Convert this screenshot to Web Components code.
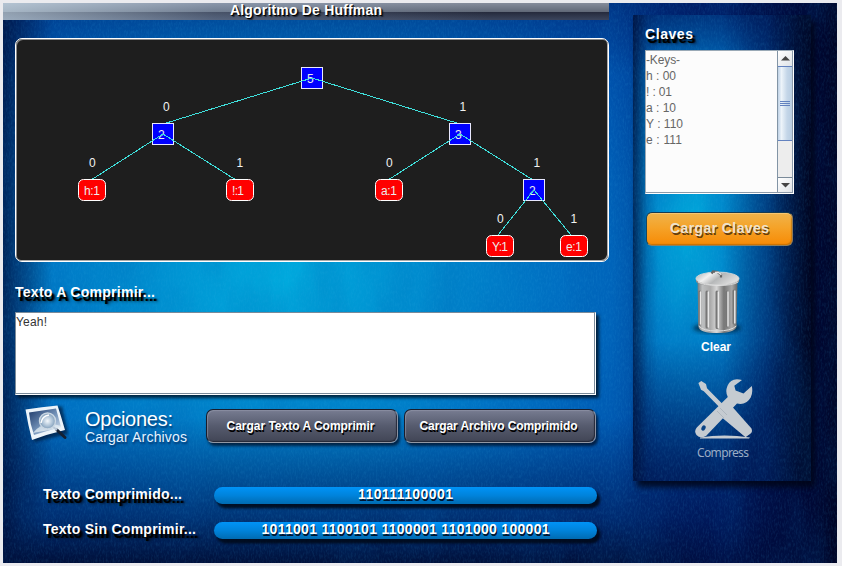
<!DOCTYPE html>
<html lang="es">
<head>
<meta charset="utf-8">
<title>Algoritmo De Huffman</title>
<style>
html,body{margin:0;height:100%;overflow:hidden;background:#ebebef}
body{font-family:"Liberation Sans",Arial,sans-serif;font-size:13px}
</style>
</head>
<body>
<huffman-app></huffman-app>
<script>
const define=(name,html,setup)=>customElements.define(name,class extends HTMLElement{
  connectedCallback(){
    if(this.shadowRoot)return;
    const t=document.createElement('template');
    t.innerHTML=html;
    this.attachShadow({mode:'open'}).append(t.content.cloneNode(true));
    if(setup)setup(this,this.shadowRoot);
  }
});

/* Woven cloth texture laid over the blue gradients */
define('cloth-texture',`<style>:host{display:block;position:absolute;inset:0;pointer-events:none;z-index:0}svg{display:block;width:100%;height:100%}</style>
<svg preserveAspectRatio="none"><defs>
<filter id="w" x="0" y="0" width="100%" height="100%"><feTurbulence type="fractalNoise" baseFrequency="0.6 0.25" numOctaves="2" seed="4"/><feColorMatrix values="0 0 0 0 .05  0 0 0 0 .45  0 0 0 0 .8  1.2 0 0 0 -.5"/></filter>
<filter id="d" x="0" y="0" width="100%" height="100%"><feTurbulence type="fractalNoise" baseFrequency="0.02 0.008" numOctaves="4" seed="9"/><feColorMatrix values="0 0 0 0 0  0 0 0 0 .1  0 0 0 0 .4  1.2 0 0 0 -.5"/></filter></defs>
<rect width="100%" height="100%" filter="url(#d)" opacity=".35"/><rect width="100%" height="100%" filter="url(#w)" opacity=".22"/></svg>`);

/* Single line of text, tracked out to the given width */
define('tracked-text',`<style>:host{display:block;white-space:nowrap}span{display:inline-block;white-space:nowrap}</style><span><slot></slot></span>`,(h,r)=>{
  const fit=()=>{
    const w=+h.getAttribute('w'),s=r.querySelector('span');
    s.style.letterSpacing='0px';
    s.style.letterSpacing=((w-s.getBoundingClientRect().width)/(h.textContent.length-1)).toFixed(3)+'px';
    h.style.width=w+'px';
  };
  fit();
  queueMicrotask(fit);
});

define('title-bar',`<style>:host{display:flex;justify-content:center;height:17px;width:606px;box-sizing:border-box;
background:linear-gradient(90deg,rgba(205,225,240,.65),rgba(150,175,205,.3) 35%,transparent 80%),linear-gradient(#858c9b 0,#626a79 50%,#252a3c 53%,#3b455d 100%);
color:#fff;font-weight:bold;font-size:14px;line-height:15px;text-shadow:1px 1px 0 #000,2px 2px 1px #0008}</style><slot></slot>`);

define('section-label',`<style>:host{display:block;color:#fff;font-weight:bold;font-size:14px;line-height:16px;text-shadow:2px 4px 0 #000,3px 4px 1px #000a,4px 5px 3px #0008}</style><slot></slot>`);

define('huffman-tree',`<style>:host{display:block;width:594px;height:224px;box-sizing:border-box;border-radius:7px;border:1.5px solid #fff;background:#1e1e1e;box-shadow:inset 1px 1px 0 #8a8a8a,inset -1px -1px 0 #aaa}
svg{display:block;margin:-1px;font-size:12px}.n rect{fill:#00f;stroke:#e8e8ff}.l rect{fill:#f00;stroke:#fff}.l text,.n text{fill:#ececec}text{fill:#f2f2f2}line{stroke:#3fe0dc;stroke-width:1;shape-rendering:crispEdges}</style>
<svg width="594" height="224" viewBox="15 38 594 224"></svg>`,(h,r)=>{
  const sq=(x,y,t)=>`<g class="n"><rect x="${x-10.5}" y="${y-10.5}" width="21" height="21"/><text x="${x-5}" y="${y+5}">${t}</text></g>`;
  const leaf=(x,y,t)=>`<g class="l"><rect x="${x-13.5}" y="${y-10.5}" width="27" height="21" rx="5"/><text x="${x-8}" y="${y+5}" textLength="${t[0]=='!'?12:16}">${t}</text></g>`;
  const ln=(a,b,c,d)=>`<line x1="${a}" y1="${b}" x2="${c}" y2="${d}"/>`;
  const bit=(x,y,t)=>`<text x="${x}" y="${y}">${t}</text>`;
  r.querySelector('svg').innerHTML=sq(312,78,5)+ln(312,78,163,124)+ln(312,78,460,124)
   +bit(163,111,0)+bit(459.5,111,1)+sq(163,134,2)+sq(460,134,3)
   +ln(163,134,91,180)+ln(163,134,236,180)+ln(460,134,388,180)+ln(460,134,533,180)
   +bit(89,167,0)+bit(236.5,167,1)+bit(386,167,0)+bit(533.5,167,1)
   +leaf(92,190,'h:1')+leaf(240,190,'!:1')+leaf(389,190,'a:1')+sq(534,190,2)
   +ln(534,190,498,235)+ln(534,190,571,235)+bit(497,223,0)+bit(570.5,223,1)
   +leaf(500,246,'Y:1')+leaf(574,246,'e:1');
});

define('text-box',`<style>:host{display:block;width:581px;height:83px;box-sizing:border-box;border:1px solid #7a8a99;border-right-color:#fff;border-bottom-color:#fff;background:#fff;box-shadow:inset -1px -1px 0 #7a8a99,3px 3px 3px #001020cc;color:#333;font-size:12px;line-height:17px;padding-top:1px}</style><slot></slot>`);

define('photo-icon',`<style>:host{display:block;width:46px;height:42px}svg{display:block}</style>
<svg width="46" height="42" viewBox="23 402 46 42"><defs><linearGradient id="s" x2="1" y2="1"><stop stop-color="#1c3868"/><stop offset=".55" stop-color="#7796bc"/><stop offset="1" stop-color="#eff6fb"/></linearGradient><radialGradient id="g"><stop stop-color="#f3f8fc"/><stop offset=".65" stop-color="#a9bfd4"/><stop offset="1" stop-color="#7f9cb8"/></radialGradient><filter id="b"><feGaussianBlur stdDeviation="1.5"/></filter></defs>
<path d="M29 412l33-6 6 28-34 8z" fill="#001637" opacity=".7" filter="url(#b)"/><path d="M25.5 409.5Q42 407 57.5 405.5Q61 416 65 430Q48 434 32 440Q28 425 25.5 409.5z" fill="#edf4fa"/><path d="M29 412.5L56 408.5L61 427Q47 431 34 435Q30 424 29 412.5z" fill="url(#s)"/><path d="M33 433q10-13 28-7l-1 2z" fill="#e7f0f6" opacity=".75"/><path d="M57 430L65 437.5" stroke="#152033" stroke-width="3" stroke-linecap="round"/><path d="M53 427l4 3" stroke="#b9c8d8" stroke-width="2"/><circle cx="47.5" cy="421" r="8" fill="url(#g)" stroke="#cad7e3" stroke-width="1.4"/><path d="M41 423q1-7 8-8" stroke="#fff" fill="none" stroke-width="1.4"/></svg>`);

define('options-title',`<style>:host{display:flex;flex-direction:column;color:#fff;text-shadow:1px 2px 2px #001a4aaa}.a{font-size:20px;line-height:21px}.b{font-size:14px;line-height:15px;color:#e6f3ff}</style><tracked-text class="a" w="88">Opciones:</tracked-text><tracked-text class="b" w="102">Cargar Archivos</tracked-text>`);

define('glass-button',`<style>:host{display:flex;align-items:center;justify-content:center;box-sizing:border-box;width:192px;height:34px;border-radius:7px;border:1px solid #181d2c;border-right-color:#8b91a0;border-bottom-color:#9298a4;
background:linear-gradient(#777c91,#565b6e 50%,#414555);box-shadow:inset 1px 1px 1px #969bad99,inset -1px -1px 1px #252938,2px 3px 3px #00122acc;color:#fff;font-weight:bold;font-size:12px;text-shadow:1px 2px 0 #000}
:host([gold]){width:147px;border-color:#173b4f #8e7958 #90805e #174862;border-radius:6px;background:linear-gradient(#efb34b,#f5a329 45%,#f78a05);box-shadow:inset 0 1px #f8c670,inset -1px -1px 1px #9f5b0088;font-size:14px;color:#eee3cd;text-shadow:1px 2px 0 #633d0d}slot{display:block;margin:-1px 3px 0 0}:host([gold]) slot{margin:-2px 0 0}</style><slot></slot>`);

define('result-bar',`<style>:host{display:flex;justify-content:center;width:383px;height:17px;border-radius:9px;background:linear-gradient(#0093f7,#0083db 50%,#006bb2);box-shadow:2px 3px 3px #00133088,3px 4px 3px #000c;color:#fff;font-weight:bold;font-size:14px;line-height:15px;text-shadow:1px 2px 0 #001530}</style><slot></slot>`);

define('key-list',`<style>:host{display:flex;box-sizing:border-box;width:149px;height:144px;border:1px solid #9aa9b6;border-right-color:#fff;border-bottom-color:#fff;background:#fcfcfc;box-shadow:inset -1px -1px 0 #8d9baa;color:#666;font-size:12px}
.k{flex:1;padding-top:1px}.k tracked-text{line-height:16px}.s{width:14px;margin:0 1px 1px 0;border-left:1px solid #8294a5;background:#ededed;display:flex;flex-direction:column}
.b{height:15px;display:flex;align-items:center;justify-content:center;background:linear-gradient(135deg,#fff,#dfe3e7)}.t{height:73px;border:1px solid #6382bf;border-width:1px 0;background:linear-gradient(90deg,#bfd2e6,#edf4fa 25%,#c4d6e8 65%,#b7cce1);display:flex;flex-direction:column;gap:1px;align-items:center;justify-content:center}.t i{width:10px;height:1px;background:#6382bf}.g{flex:1}.e{border-top:1px solid #7a8a99;height:14px}</style>
<div class="k"><tracked-text w="34">-Keys-</tracked-text><tracked-text w="30">h : 00</tracked-text><tracked-text w="26">! : 01</tracked-text><tracked-text w="30">a : 10</tracked-text><tracked-text w="37">Y : 110</tracked-text><tracked-text w="36">e : 111</tracked-text></div>
<div class="s"><div class="b"><svg width="9" height="5"><path d="M0 4.5L4.5 0L9 4.5z" fill="#444"/></svg></div><div class="t"><i></i><i></i><i></i></div><div class="g"></div><div class="b e"><svg width="9" height="5"><path d="M0 0L4.5 4.5L9 0z" fill="#444"/></svg></div></div>`);

define('trash-icon',`<style>:host{display:block;width:56px;height:66px}svg{display:block}</style>
<svg width="56" height="66" viewBox="689 268 56 66"><defs><linearGradient id="m"><stop stop-color="#77797b"/><stop offset=".12" stop-color="#bdbfc0"/><stop offset=".32" stop-color="#aaa"/><stop offset=".48" stop-color="#d6d6d6"/><stop offset=".66" stop-color="#777"/><stop offset=".86" stop-color="#a8a8a8"/><stop offset="1" stop-color="#666"/></linearGradient><linearGradient id="l" x2="1" y2=".4"><stop stop-color="#a4aaad"/><stop offset=".35" stop-color="#f1f1f1"/><stop offset=".6" stop-color="#b6b8b9"/><stop offset="1" stop-color="#ddd"/></linearGradient><filter id="b" x="-30%" y="-80%" width="160%" height="260%"><feGaussianBlur stdDeviation="2"/></filter></defs>
<ellipse cx="717" cy="327" rx="24" ry="5" fill="#001b33" opacity=".75" filter="url(#b)"/>
<path d="M697.5 280H737.5L736.5 326Q734 332 717 332T698.5 326z" fill="url(#m)"/><path d="M698.7 325Q703 330 717 330T736.3 325" stroke="#ddd" fill="none" stroke-width="1"/>
<g stroke-linecap="round" fill="none"><path d="M699.8 291v32M707 291v35M717 291v35.500M727 291v34M734 290v32" stroke="#777" stroke-width="3"/><path d="M700.6 291v32M708.300 291v35M718.300 291v35.500M728 291v34M734.800 290v32" stroke-width="1.5" stroke="#e6e6e6"/></g>
<path d="M696 277v4q4 4 21.500 4t21.500-4v-4z" fill="#898b8c"/><ellipse cx="717.5" cy="277.500" rx="21.5" ry="6.5" fill="url(#l)" stroke="#dcdcdc" stroke-width=".8"/><path d="M698 281q5 3.500 20 3.500t20-3.500" stroke="#f0f0f0" fill="none" stroke-width=".8"/>
<path d="M711.500 272.500l1.500-2 4 .3 4 2.700v3" fill="none" stroke="#666" stroke-width="2.2"/><path d="M715 271.500l3-.3 3.500 2.500" fill="none" stroke="#e5e5e5" stroke-width="1.5"/></svg>`);

define('tools-icon',`<style>:host{display:block;width:60px;height:62px}svg{display:block}</style>
<svg width="60" height="62" viewBox="694 377 60 62"><g fill="#c5cbd1"><path d="M700 436.5Q724 432.5 750 436.5L749 437.6H700z"/><path d="M698.4 382L701.3 380L706 383L707 387.3L724 404.5L720.7 407.6L703.8 390.3L701 388.8z"/><path d="M717.7 413L729.2 402.3L751.5 427.5Q753 431 750 433L745.5 436.3z"/>
<path d="M742 379Q731 376 727.4 385Q725 391 727.8 396L697 426.2Q693.5 430 696.5 434Q700 438 706 435L737 402.6Q746 404.7 750.7 396.5Q753.2 391 751.8 385L743.5 392.4L735.6 389.6L734.3 384.7z"/></g><path d="M720 407l7 7M717 410l7 7" stroke="#aeb6be"/><ellipse cx="703.5" cy="427" rx="2" ry="2.8" transform="rotate(25 703.5 427)" fill="#0a4385"/></svg>`);

define('side-panel',`<style>:host{display:block;position:relative;width:178px;height:466px;box-sizing:border-box;padding:11px 0 0 12px;
background:linear-gradient(90deg,#00103acc 0,#00195033 8%,transparent 14%,transparent 50%,#000a3c77 75%,#000522e8 96%,#000420),linear-gradient(#00155599,transparent 12%,transparent 70%,#00114acc 100%),radial-gradient(ellipse 145px 330px at 57px 215px,#00aadc 0,#0083cb 35%,#0059b0 70%,#003a90);box-shadow:4px 6px 6px #000516d9}
.c{position:relative;z-index:1;display:flex;flex-direction:column;align-items:flex-start}key-list{margin-top:8px}glass-button{margin:18px 0 0 1px}trash-icon{margin:23px 0 0 44px}.clear{color:#fff;font-weight:bold;font-size:12px;line-height:14px;margin:5px 0 0 56px}tools-icon{margin:24px 0 0 49px}.compress{color:#9aacc5;font-family:"Noto Sans","Open Sans",sans-serif;font-size:12px;line-height:14px;margin:6px 0 0 52px}</style>
<cloth-texture></cloth-texture><div class="c"><section-label><tracked-text w="48">Claves</tracked-text></section-label><key-list></key-list><glass-button gold><tracked-text w="99">Cargar Claves</tracked-text></glass-button><trash-icon></trash-icon><tracked-text class="clear" w="30">Clear</tracked-text><tools-icon></tools-icon><tracked-text class="compress" w="52">Compress</tracked-text></div>`);

define('huffman-app',`<style>:host{display:block;box-sizing:border-box;width:842px;height:566px;padding:3px 5px 3px 3px;background:#ebebef}
.w{position:relative;overflow:hidden;width:834px;height:560px;display:flex;background:
linear-gradient(90deg,#00103ccc 0,transparent 6%,transparent 73%,#00105088 86%,#000630ee 97%,#000526),
linear-gradient(#00104a55,transparent 13%,transparent 74%,#00104599 92%,#000b32ee),
radial-gradient(ellipse 560px 430px at 275px 278px,#00aee0 0,#008fd0 22%,#006fc2 50%,#004eaa 78%,#00308a)}
.m{position:relative;z-index:1;width:606px;display:flex;flex-direction:column}huffman-tree{margin:18px 0 0 12px}.t{margin:22px 0 0 12px}text-box{margin:12px 0 0 12px}
.o{display:flex;margin:7px 0 0 20px;height:42px}options-title{margin:7px 0 0 16px;width:121px}glass-button{margin-top:7px;flex:none}glass-button+glass-button{margin-left:6px}
.r{display:flex;align-items:flex-start;height:17px;margin-left:40px}.r section-label{width:171px;line-height:15px;margin-top:-.5px}.r1{margin-top:43px}.r2{margin-top:18px}side-panel{margin:12px 0 0 24px;z-index:1;flex:none}</style>
<div class="w"><cloth-texture></cloth-texture><div class="m"><title-bar><tracked-text w="152">Algoritmo De Huffman</tracked-text></title-bar><huffman-tree></huffman-tree>
<section-label class="t"><tracked-text w="140">Texto A Comprimir...</tracked-text></section-label><text-box><tracked-text w="31">Yeah!</tracked-text></text-box>
<div class="o"><photo-icon></photo-icon><options-title></options-title><glass-button><tracked-text w="148">Cargar Texto A Comprimir</tracked-text></glass-button><glass-button><tracked-text w="158">Cargar Archivo Comprimido</tracked-text></glass-button></div>
<div class="r r1"><section-label><tracked-text w="139">Texto Comprimido...</tracked-text></section-label><result-bar><tracked-text w="95">110111100001</tracked-text></result-bar></div>
<div class="r r2"><section-label><tracked-text w="153">Texto Sin Comprimir...</tracked-text></section-label><result-bar><tracked-text w="288">1011001 1100101 1100001 1101000 100001</tracked-text></result-bar></div></div>
<side-panel></side-panel></div>`);
</script>
</body>
</html>
